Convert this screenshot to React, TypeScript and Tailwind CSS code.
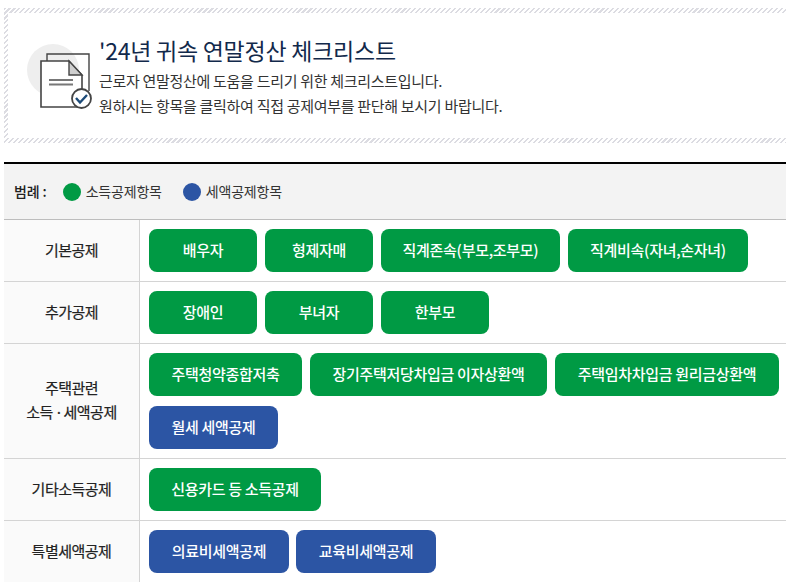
import React from "react";

const G = "bg-[#009a44]";
const B = "bg-[#2c55a4]";

function Btn({ w, c, children }: { w: string; c: string; children: React.ReactNode }) {
  return (
    <div className={`${w} ${c} h-[43px] rounded-[8px] flex items-center justify-center text-white text-[15px] font-medium tracking-[-0.3px] whitespace-nowrap`}>
      {children}
    </div>
  );
}

function Row({ label, h, children, last }: { label: React.ReactNode; h: string; children: React.ReactNode; last?: boolean }) {
  return (
    <div className={`flex ${h} ${last ? "" : "border-b border-[#d4d4d4]"}`}>
      <div className="w-[136px] shrink-0 bg-[#fafafa] border-r border-[#d4d4d4] flex items-center justify-center text-center text-[15px] leading-[24px] text-[#222] tracking-[-0.5px] pb-[2px] [-webkit-text-stroke:0.2px_#222]">
        <div>{label}</div>
      </div>
      <div className="flex-1 pl-[9px] pt-[9px] flex flex-wrap content-start gap-x-[8px] gap-y-[10px]">{children}</div>
    </div>
  );
}

export default function App() {
  return (
    <div className="w-[786px] h-[582px] overflow-hidden bg-white pl-[4px] pt-[8px] font-['Noto_Sans_CJK_KR','Noto_Sans',sans-serif]">
      <div className="w-[800px] h-[135px] pl-[4px] py-[5px] bg-[repeating-linear-gradient(135deg,#dcdce2_0px,#dcdce2_1.5px,#ffffff_1.5px,#ffffff_3.5px)]">
        <div className="h-full bg-white flex pl-[19px] pt-[22px]">
          <svg width="66" height="66" viewBox="0 0 66 66" className="shrink-0 mt-[8px]">
            <circle cx="26" cy="27" r="26" fill="#eeeeee" />
            <path d="M20 18V11H62V48" fill="none" stroke="#444" strokeWidth="1.4" />
            <path d="M14 18H42L55 32V64H14Z" fill="#fff" stroke="#444" strokeWidth="1.6" />
            <path d="M42 18V32H55Z" fill="#cfcfcf" stroke="#444" strokeWidth="1.4" />
            <path d="M22 37H46M22 41.5H46" stroke="#777" strokeWidth="1.8" />
            <circle cx="54.5" cy="55.5" r="9.5" fill="#fff" stroke="#444" strokeWidth="1.8" />
            <path d="M49 55L53 59.5L60 52" fill="none" stroke="#1c4a78" strokeWidth="2.4" />
          </svg>
          <div className="ml-[6px]">
            <div className="text-[23px] leading-[32px] text-[#12294b] tracking-[-0.25px] -mt-[1px] whitespace-nowrap">'24년 귀속 연말정산 체크리스트</div>
            <div className="text-[15px] leading-[24px] text-[#333] tracking-[-0.3px] mt-[3px] whitespace-nowrap">근로자 연말정산에 도움을 드리기 위한 체크리스트입니다.</div>
            <div className="text-[15px] leading-[24px] text-[#333] tracking-[-0.3px] mt-[1px] whitespace-nowrap">원하시는 항목을 클릭하여 직접 공제여부를 판단해 보시기 바랍니다.</div>
          </div>
        </div>
      </div>
      <div className="mt-[19px] border-t-2 border-black">
        <div className="h-[56px] bg-[#f3f3f3] border-b border-[#bdbdbd] flex items-center pl-[10px]">
          <span className="text-[14px] font-medium text-[#222] tracking-[-0.1px] mr-[16px]">범례 :</span>
          <span className="w-[18px] h-[18px] rounded-full bg-[#009a44] mr-[5px]" />
          <span className="text-[14px] text-[#333] tracking-[-0.2px] mr-[21px]">소득공제항목</span>
          <span className="w-[18px] h-[18px] rounded-full bg-[#2c55a4] mr-[5px]" />
          <span className="text-[14px] text-[#333] tracking-[-0.2px]">세액공제항목</span>
        </div>
        <Row label="기본공제" h="h-[62px]">
          <Btn w="w-[108px]" c={G}>배우자</Btn>
          <Btn w="w-[108px]" c={G}>형제자매</Btn>
          <Btn w="w-[179px]" c={G}>직계존속(부모,조부모)</Btn>
          <Btn w="w-[180px]" c={G}>직계비속(자녀,손자녀)</Btn>
        </Row>
        <Row label="추가공제" h="h-[62px]">
          <Btn w="w-[108px]" c={G}>장애인</Btn>
          <Btn w="w-[108px]" c={G}>부녀자</Btn>
          <Btn w="w-[108px]" c={G}>한부모</Btn>
        </Row>
        <Row label={<>주택관련<br />소득<span className="tracking-[-1.5px]"> · </span>세액공제</>} h="h-[115px]">
          <Btn w="w-[153px]" c={G}>주택청약종합저축</Btn>
          <Btn w="w-[237px]" c={G}>장기주택저당차입금 이자상환액</Btn>
          <Btn w="w-[224px]" c={G}>주택임차차입금 원리금상환액</Btn>
          <Btn w="w-[129px]" c={B}>월세 세액공제</Btn>
        </Row>
        <Row label="기타소득공제" h="h-[62px]">
          <Btn w="w-[172px]" c={G}>신용카드 등 소득공제</Btn>
        </Row>
        <Row label="특별세액공제" h="h-[62px]" last>
          <Btn w="w-[140px]" c={B}>의료비세액공제</Btn>
          <Btn w="w-[140px] -ml-[1px]" c={B}>교육비세액공제</Btn>
        </Row>
      </div>
    </div>
  );
}
